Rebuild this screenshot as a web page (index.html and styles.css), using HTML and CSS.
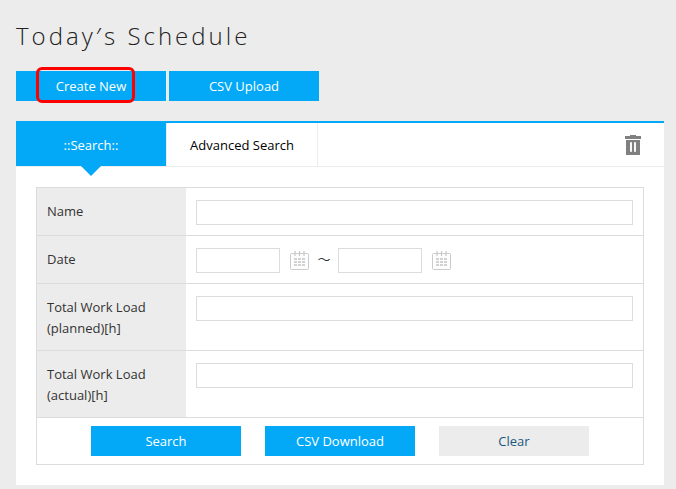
FILE: index.html
```html
<!DOCTYPE html>
<html lang="en">
<head>
<meta charset="utf-8">
<title>Today’s Schedule</title>
<link rel="stylesheet" href="styles.css">
</head>
<body>
<svg class="defs" aria-hidden="true">
  <symbol id="calendar" viewBox="0 0 20 20">
    <rect x="0.500" y="2.500" width="18" height="16" rx="1" fill="#fdfdfd" stroke="#cbcbcb"/>
    <path d="M5 0v5M9.500 0v5M14 0v5" stroke="#c8c8c8" stroke-width="1.200"/>
    <path d="M4 8h11M4 11h11M4 14h11" stroke="#d2d2d2" stroke-width="2" stroke-dasharray="3 1"/>
  </symbol>
</svg>
<main class="page">
  <h1 class="title">Today<span class="mark">′</span>s Schedule</h1>
  <div class="actions">
    <button class="btn marked" type="button">Create New</button>
    <button class="btn" type="button">CSV Upload</button>
  </div>
  <section class="panel">
    <div class="tabs">
      <button class="tab active" type="button">::Search::</button>
      <button class="tab" type="button">Advanced Search</button>
      <button class="trash" type="button" aria-label="Delete">
        <svg width="18" height="21" viewBox="0 0 18 21">
          <path d="M6 0h6v1h5v3H1V1h5z" fill="#808080"/>
          <path d="M2 5h14v15H2z" fill="#808080"/>
          <path d="M7 8v8M11 8v8" stroke="#fff" stroke-width="2" stroke-linecap="round"/>
          <path d="M7 8v8M11 8v8" stroke="#ddd" stroke-width="0.500"/>
        </svg>
      </button>
    </div>
    <form class="form">
      <div class="row">
        <label class="label" for="name">Name</label>
        <div class="field"><input class="text" id="name" type="text"></div>
      </div>
      <div class="row">
        <label class="label" for="from">Date</label>
        <div class="field">
          <input class="text date" id="from" type="text">
          <button class="cal" type="button" aria-label="Pick start date"><svg width="20" height="20"><use href="#calendar"/></svg></button>
          <span class="tilde">～</span>
          <input class="text date" type="text" aria-label="End date">
          <button class="cal" type="button" aria-label="Pick end date"><svg width="20" height="20"><use href="#calendar"/></svg></button>
        </div>
      </div>
      <div class="row">
        <label class="label" for="planned">Total Work Load (planned)[h]</label>
        <div class="field"><input class="text" id="planned" type="text"></div>
      </div>
      <div class="row">
        <label class="label" for="actual">Total Work Load (actual)[h]</label>
        <div class="field"><input class="text" id="actual" type="text"></div>
      </div>
      <div class="buttons">
        <button class="btn" type="button">Search</button>
        <button class="btn" type="button">CSV Download</button>
        <button class="btn clear" type="reset">Clear</button>
      </div>
    </form>
  </section>
</main>
</body>
</html>
```
FILE: styles.css
```css
*,
*::after {
  box-sizing: border-box;
}

body {
  margin: 0;
  background: #ececec;
  color: #333;
  font: 13px/21px "Open Sans", "Noto Sans", sans-serif;
}

button,
input {
  margin: 0;
  padding: 0;
  border: 0;
  border-radius: 0;
  background: none;
  color: inherit;
  font: inherit;
}

svg {
  display: block;
}

.defs {
  position: absolute;
  width: 0;
  height: 0;
}

.page {
  padding: 16px 12px 4px 16px;
}

.title {
  margin: 0 0 15px;
  color: #222;
  font-size: 24px;
  font-weight: 300;
  line-height: 40px;
  letter-spacing: 3px;
}

.mark {
  font-family: "Noto Sans", sans-serif;
}

.actions {
  display: flex;
  gap: 3px;
  margin-bottom: 20px;
}

.btn {
  position: relative;
  width: 150px;
  height: 30px;
  background: #03a9f7;
  color: #fff;
}

.marked::after {
  content: "";
  position: absolute;
  top: -4px;
  left: 20px;
  width: 99px;
  height: 36px;
  border: 3px solid #f00;
  border-radius: 6px;
}

.panel {
  border-top: 2px solid #03a9f7;
  background: #fff;
}

.tabs {
  display: flex;
  align-items: stretch;
  height: 44px;
  border-bottom: 1px solid #ececec;
}

.tab {
  position: relative;
  width: 152px;
  padding-top: 2px;
  border: solid #ececec;
  border-width: 0 1px;
  color: #000;
}

.active {
  width: 150px;
  border: 0;
  background: #03a9f7;
  color: #fff;
}

.active::after {
  content: "";
  position: absolute;
  top: 100%;
  left: 50%;
  margin-left: -10px;
  border: 10px solid transparent;
  border-top-color: #03a9f7;
  border-bottom: 0;
}

.trash {
  align-self: center;
  margin: 2px 22px 0 auto;
}

.form {
  margin: 0 20px;
  padding: 20px 0;
}

.row {
  display: flex;
  border: 1px solid #dcdcdc;
  border-bottom: 0;
}

.label {
  flex: none;
  width: 149px;
  padding: 13px 10px 11px;
  background: #ececec;
}

.field {
  flex: 1;
  display: flex;
  align-items: flex-start;
  padding: 12px 10px 10px;
}

.text {
  flex: 1;
  min-width: 0;
  height: 25px;
  padding: 0 6px;
  border: 1px solid #dcdcdc;
  background: #fff;
}

.date {
  flex: 0 1 84px;
}

.cal {
  margin: 3px 0 0 10px;
}

.tilde {
  width: 28px;
  text-align: center;
  font-family: "Noto Sans CJK JP", sans-serif;
}

.buttons {
  display: flex;
  justify-content: center;
  gap: 24px;
  padding: 8px;
  border: 1px solid #dcdcdc;
}

.clear {
  background: #ececec;
  color: #1c567c;
}
```
